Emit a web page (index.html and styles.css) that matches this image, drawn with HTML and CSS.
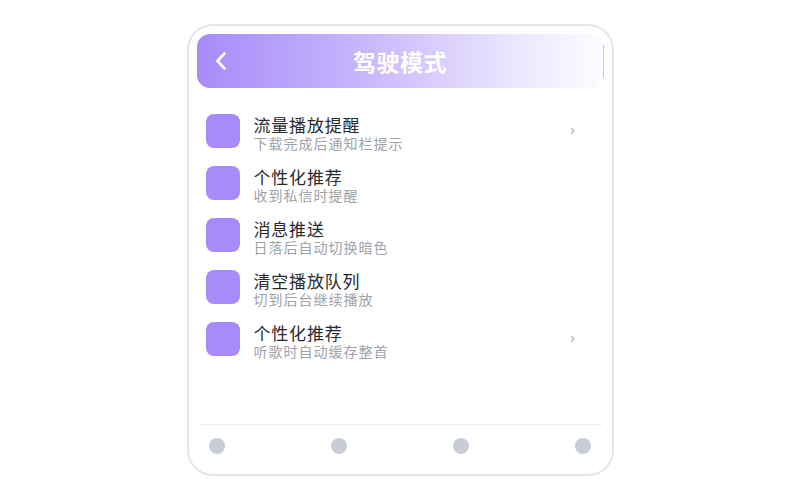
FILE: index.html
```html
<!DOCTYPE html>
<html lang="zh">
<head>
<meta charset="utf-8">
<title>驾驶模式</title>
<link rel="stylesheet" href="styles.css">
</head>
<body>
<div class="phone">
  <header class="topbar">
    <svg class="back" width="14" height="20" viewBox="0 0 14 20"><path d="M10.5 2.5 L3.5 10 L10.5 17.5" fill="none" stroke="#fff" stroke-width="2.6" stroke-linecap="round" stroke-linejoin="round"/></svg>
    <h1 class="title">驾驶模式</h1>
  </header>
  <ul class="list">
    <li class="item"><span class="icon"></span><div class="text"><div class="name">流量播放提醒</div><div class="desc">下载完成后通知栏提示</div></div><span class="chev">›</span></li>
    <li class="item"><span class="icon"></span><div class="text"><div class="name">个性化推荐</div><div class="desc">收到私信时提醒</div></div></li>
    <li class="item"><span class="icon"></span><div class="text"><div class="name">消息推送</div><div class="desc">日落后自动切换暗色</div></div></li>
    <li class="item"><span class="icon"></span><div class="text"><div class="name">清空播放队列</div><div class="desc">切到后台继续播放</div></div></li>
    <li class="item"><span class="icon"></span><div class="text"><div class="name">个性化推荐</div><div class="desc">听歌时自动缓存整首</div></div><span class="chev">›</span></li>
  </ul>
  <nav class="tabs">
    <span class="dot"></span><span class="dot"></span><span class="dot"></span><span class="dot"></span>
  </nav>
</div>
</body>
</html>
```
FILE: styles.css
```css
* { box-sizing: border-box; }
html, body { margin: 0; padding: 0; }
body {
  width: 800px;
  height: 500px;
  background: #fff;
  display: flex;
  align-items: center;
  justify-content: center;
  font-family: "Noto Sans CJK SC", "Noto Sans", sans-serif;
}
.phone {
  width: 427px;
  height: 452px;
  border: 2px solid #e6e6ea;
  border-radius: 26px;
  padding: 8px;
  display: flex;
  flex-direction: column;
  background: #fff;
}
.topbar {
  position: relative;
  height: 54px;
  border-radius: 13px;
  background: linear-gradient(90deg, #a78bfa 0%, #c6b6fc 40%, #e9e2fe 75%, #fdfcff 100%);
  display: flex;
  align-items: center;
  justify-content: center;
  flex-shrink: 0;
}
.topbar::after {
  content: "";
  position: absolute;
  right: 0;
  top: 11px;
  bottom: 10px;
  width: 1px;
  background: #c9bdf8;
}
.back {
  position: absolute;
  left: 17px;
  top: 17px;
}
.title {
  margin: 0;
  font-size: 23px;
  font-weight: 700;
  color: #fff;
  line-height: 30px;
  letter-spacing: 0.5px;
}
.list {
  list-style: none;
  margin: 0;
  padding: 17px 0 0 0;
  flex: 1;
}
.item {
  height: 52px;
  display: flex;
  align-items: flex-start;
  padding: 9px 29px 0 9px;
}
.icon {
  width: 34px;
  height: 34px;
  border-radius: 8px;
  background: #a78bfa;
  flex-shrink: 0;
}
.text {
  margin-left: 14px;
  margin-top: 1px;
  flex: 1;
}
.name {
  font-size: 17px;
  line-height: 20px;
  color: #2a2a2e;
  letter-spacing: 0.8px;
}
.desc {
  font-size: 14px;
  line-height: 16px;
  color: #a0a3aa;
  letter-spacing: 1px;
}
.chev {
  font-size: 15px;
  color: #9a9ca3;
  line-height: 18px;
  margin-top: 6px;
}
.tabs {
  border-top: 1px solid #eeeef1;
  margin: 0 2px;
  height: 42px;
  display: flex;
  align-items: center;
  justify-content: space-between;
  padding: 0 10px 0 10px;
  flex-shrink: 0;
}
.dot {
  width: 16px;
  height: 16px;
  border-radius: 50%;
  background: #c8ccd4;
}
```
